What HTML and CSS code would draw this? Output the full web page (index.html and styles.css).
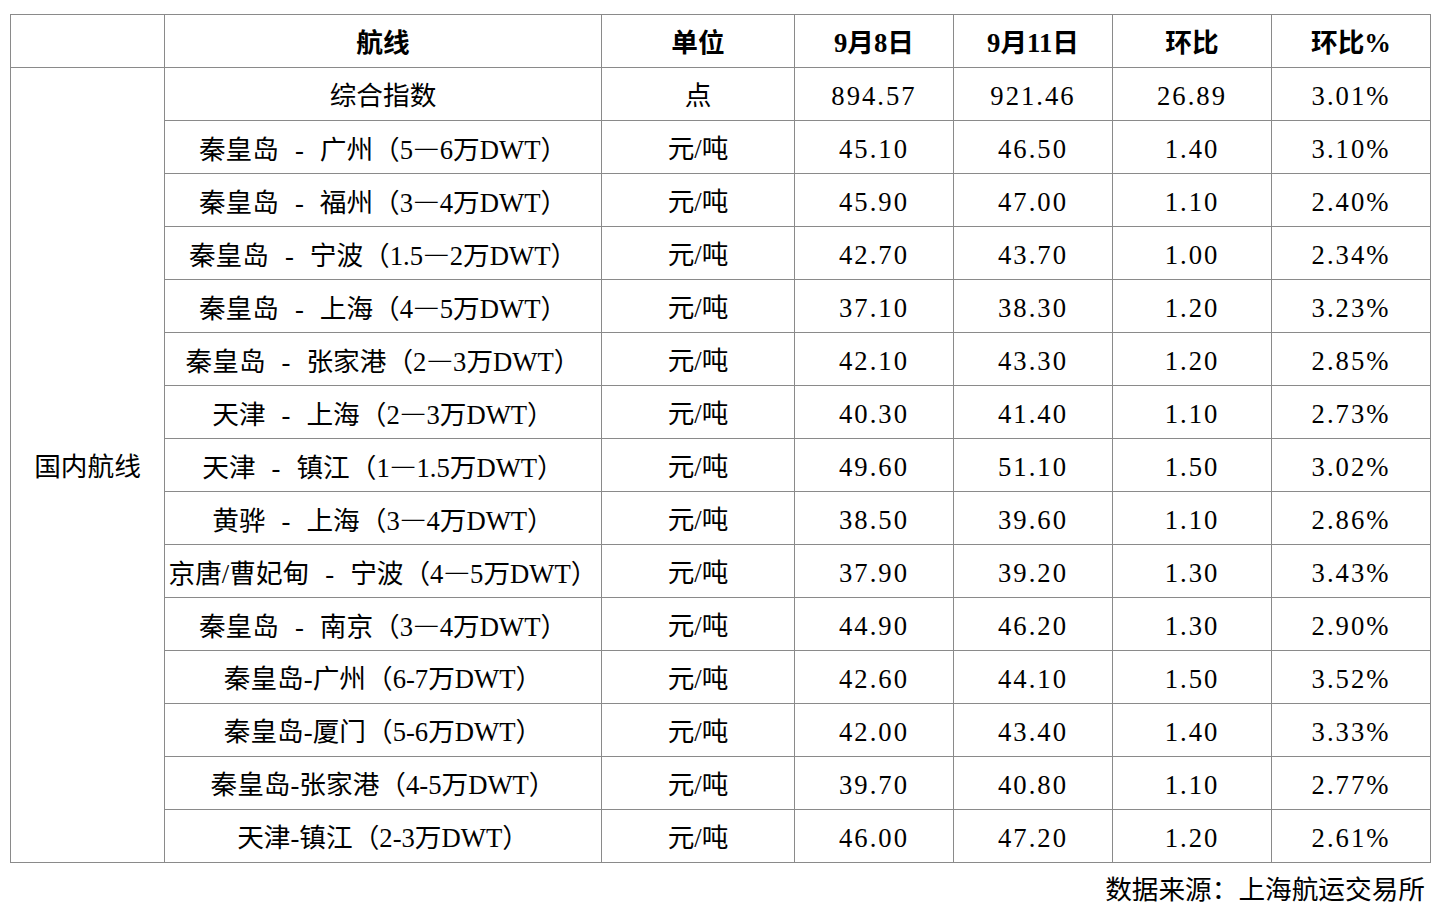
FILE: index.html
```html
<!DOCTYPE html>
<html lang="zh-CN">
<head>
<meta charset="utf-8">
<title>航线运价</title>
<link rel="stylesheet" href="styles.css">
</head>
<body>
<div class="page">
<table class="rates">
<colgroup>
<col class="c-group"><col class="c-route"><col class="c-unit"><col class="c-num"><col class="c-num"><col class="c-num"><col class="c-num">
</colgroup>
<thead>
<tr><th></th><th>航线</th><th>单位</th><th>9月8日</th><th>9月11日</th><th>环比</th><th>环比%</th></tr>
</thead>
<tbody>
<tr><td class="group" rowspan="15">国内航线</td><td>综合指数</td><td>点</td><td>894.57</td><td>921.46</td><td>26.89</td><td>3.01%</td></tr>
<tr><td>秦皇岛<span class="sep">-</span>广州（5<span class="dash">—</span>6万DWT）</td><td>元/吨</td><td>45.10</td><td>46.50</td><td>1.40</td><td>3.10%</td></tr>
<tr><td>秦皇岛<span class="sep">-</span>福州（3<span class="dash">—</span>4万DWT）</td><td>元/吨</td><td>45.90</td><td>47.00</td><td>1.10</td><td>2.40%</td></tr>
<tr><td>秦皇岛<span class="sep">-</span>宁波（1.5<span class="dash">—</span>2万DWT）</td><td>元/吨</td><td>42.70</td><td>43.70</td><td>1.00</td><td>2.34%</td></tr>
<tr><td>秦皇岛<span class="sep">-</span>上海（4<span class="dash">—</span>5万DWT）</td><td>元/吨</td><td>37.10</td><td>38.30</td><td>1.20</td><td>3.23%</td></tr>
<tr><td>秦皇岛<span class="sep">-</span>张家港（2<span class="dash">—</span>3万DWT）</td><td>元/吨</td><td>42.10</td><td>43.30</td><td>1.20</td><td>2.85%</td></tr>
<tr><td>天津<span class="sep">-</span>上海（2<span class="dash">—</span>3万DWT）</td><td>元/吨</td><td>40.30</td><td>41.40</td><td>1.10</td><td>2.73%</td></tr>
<tr><td>天津<span class="sep">-</span>镇江（1<span class="dash">—</span>1.5万DWT）</td><td>元/吨</td><td>49.60</td><td>51.10</td><td>1.50</td><td>3.02%</td></tr>
<tr><td>黄骅<span class="sep">-</span>上海（3<span class="dash">—</span>4万DWT）</td><td>元/吨</td><td>38.50</td><td>39.60</td><td>1.10</td><td>2.86%</td></tr>
<tr><td>京唐/曹妃甸<span class="sep">-</span>宁波（4<span class="dash">—</span>5万DWT）</td><td>元/吨</td><td>37.90</td><td>39.20</td><td>1.30</td><td>3.43%</td></tr>
<tr><td>秦皇岛<span class="sep">-</span>南京（3<span class="dash">—</span>4万DWT）</td><td>元/吨</td><td>44.90</td><td>46.20</td><td>1.30</td><td>2.90%</td></tr>
<tr><td>秦皇岛-广州（6-7万DWT）</td><td>元/吨</td><td>42.60</td><td>44.10</td><td>1.50</td><td>3.52%</td></tr>
<tr><td>秦皇岛-厦门（5-6万DWT）</td><td>元/吨</td><td>42.00</td><td>43.40</td><td>1.40</td><td>3.33%</td></tr>
<tr><td>秦皇岛-张家港（4-5万DWT）</td><td>元/吨</td><td>39.70</td><td>40.80</td><td>1.10</td><td>2.77%</td></tr>
<tr><td>天津-镇江（2-3万DWT）</td><td>元/吨</td><td>46.00</td><td>47.20</td><td>1.20</td><td>2.61%</td></tr>
</tbody>
</table>
<p class="source">数据来源：上海航运交易所</p>
</div>
</body>
</html>
```
FILE: styles.css
```css
html, body {
  margin: 0;
  padding: 0;
  background: #ffffff;
}
.page {
  padding: 14px 0 0 10px;
  width: 1421px;
  font-family: "Liberation Serif", "Noto Sans CJK SC", serif;
  font-size: 26.67px;
  color: #000000;
}
.rates {
  border-collapse: collapse;
  table-layout: fixed;
  width: 1421px;
}
.c-group { width: 154px; }
.c-route { width: 437px; }
.c-unit { width: 193px; }
.c-num { width: 159px; }
.rates th,
.rates td {
  border: 1px solid #8a8a8a;
  padding: 3px 0 0 0;
  height: 49px;
  text-align: center;
  vertical-align: middle;
  line-height: 30px;
  white-space: nowrap;
  font-weight: normal;
}
.rates th {
  font-weight: bold;
}
.rates tbody td:nth-last-child(-n+4) {
  letter-spacing: 2px;
}
.sep {
  margin: 0 0.6em;
}
.dash {
  font-family: "Noto Sans CJK SC", sans-serif;
  font-weight: bold;
}
.source {
  margin: 12px 6px 0 0;
  text-align: right;
  line-height: 30px;
}
```
